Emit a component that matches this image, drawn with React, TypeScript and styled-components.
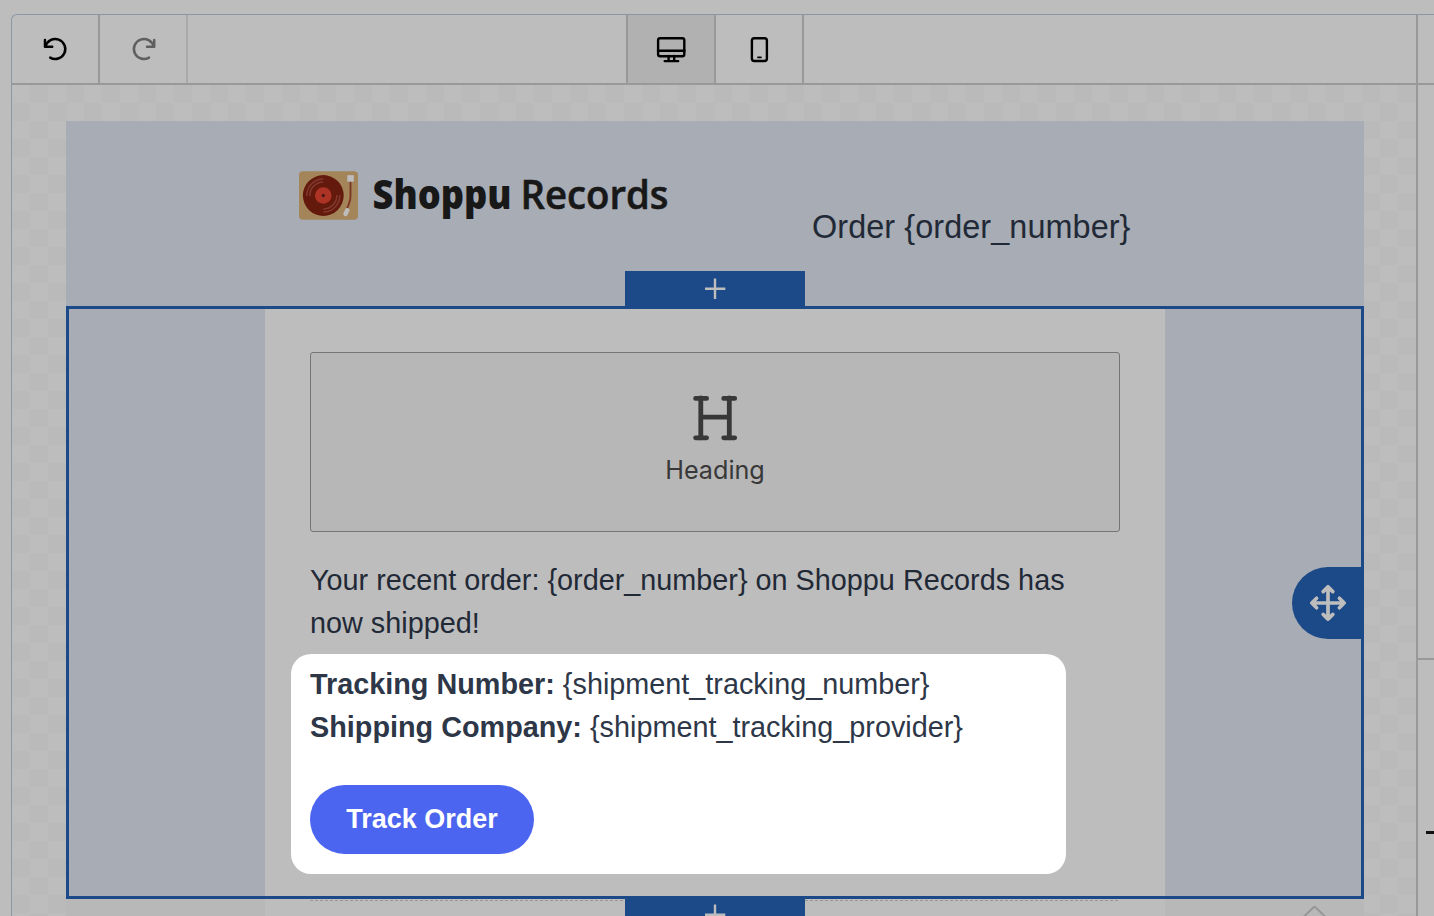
import React from "react";
import styled, { createGlobalStyle } from "styled-components";

const ColorPalette = {
	page: "#bdbdbd",
	checker: "#bababa",
	frame: "#8a98a6",
	line: "#999999",
	lineSoft: "#a9a9a9",
	active: "#b1b1b1",
	section: "#a7acb5",
	footer: "#b8b8b8",
	blue: "#1c4987",
	ink: "#222936",
	inkBright: "#2d3748",
	button: "#4c65f0",
	white: "#ffffff",
};

const GlobalStyle = createGlobalStyle`
	* {
		box-sizing: border-box;
	}
	body {
		margin: 0;
		background: ${ColorPalette.page};
		font-family: "Liberation Sans", Arial, sans-serif;
		overflow: hidden;
	}
	svg {
		display: block;
	}
`;

const Page = styled.div`
	height: 916px;
	padding: 14px 0 0 11px;
	overflow: hidden;
`;

const Editor = styled.div`
	display: flex;
	height: 920px;
	border: 1px solid ${ColorPalette.frame};
	border-right: 0;
	border-top-left-radius: 6px;
`;

const Main = styled.div`
	width: 1406px;
	flex: none;
	display: flex;
	flex-direction: column;
	border-right: 2px solid ${ColorPalette.line};
`;

const Toolbar = styled.div`
	height: 70px;
	flex: none;
	display: flex;
	border-bottom: 2px solid ${ColorPalette.line};
`;

const ToolGroup = styled.div`
	display: flex;
	flex: none;
`;

const DeviceGroup = styled(ToolGroup)`
	border-left: 2px solid ${ColorPalette.line};
	margin-left: 438px;
`;

const ToolButton = styled.button<{ $active?: boolean; $soft?: boolean }>`
	width: 88px;
	height: 68px;
	padding: 0;
	border: 0;
	border-right: 2px solid ${(props) => (props.$soft ? ColorPalette.lineSoft : ColorPalette.line)};
	background: ${(props) => (props.$active ? ColorPalette.active : "transparent")};
	color: ${(props) => (props.$soft ? "#5f5f5f" : "#000")};
`;

const Canvas = styled.div`
	flex: 1;
	padding: 36px 52px 0 54px;
	background: repeating-conic-gradient(${ColorPalette.checker} 0 25%, ${ColorPalette.page} 0 50%) 0 0 / 36px 36px;
`;

const HeaderSection = styled.div`
	height: 185px;
	padding: 40px 199px 0 233px;
	display: flex;
	background: ${ColorPalette.section};
`;

const OrderTitle = styled.div`
	margin: 42px 0 0 133px;
	font-size: 32.4px;
	line-height: 49px;
	letter-spacing: 0.08px;
	color: ${ColorPalette.ink};
	white-space: nowrap;
`;

const SelectedSection = styled.div`
	position: relative;
	height: 593px;
	padding: 0 196px;
	border: 3px solid ${ColorPalette.blue};
	background: ${ColorPalette.section};
`;

const AddTab = styled.div<{ $bottom?: boolean }>`
	position: absolute;
	left: 556px;
	top: ${(props) => (props.$bottom ? "588px" : "-38px")};
	width: 180px;
	height: 37px;
	background: ${ColorPalette.blue};
`;

const MoveHandle = styled.div`
	position: absolute;
	right: -3px;
	top: 258px;
	width: 72px;
	height: 72px;
	border-radius: 36px 0 0 36px;
	background: ${ColorPalette.blue};
`;

const Content = styled.div`
	height: 587px;
	padding: 43px 45px 0;
	background: ${ColorPalette.page};
`;

const HeadingBlock = styled.div`
	height: 180px;
	padding-top: 41px;
	display: flex;
	flex-direction: column;
	align-items: center;
	border: 1px solid #757575;
	border-radius: 3px;
	background: #b7b7b7;
	color: #383838;
`;

const HeadingLabel = styled.div`
	margin-top: 12px;
	font-family: Inter, sans-serif;
	font-size: 25.2px;
	line-height: 32px;
`;

const Paragraph = styled.p<{ $bright?: boolean }>`
	margin: 0;
	font-size: 28.8px;
	line-height: 43.2px;
	color: ${(props) => (props.$bright ? ColorPalette.inkBright : ColorPalette.ink)};
	white-space: nowrap;
`;

const Message = styled.div`
	padding-top: 27px;
	height: 122px;
`;

const Spotlight = styled.div`
	width: 775px;
	height: 220px;
	margin-left: -19px;
	padding: 9px 19px 0;
	border-radius: 20px;
	background: ${ColorPalette.white};
`;

const TrackButton = styled.button`
	display: block;
	width: 224px;
	height: 69px;
	margin-top: 35.6px;
	padding: 0;
	border: 0;
	border-radius: 35px;
	background: ${ColorPalette.button};
	color: ${ColorPalette.white};
	font: bold 27px "Liberation Sans", Arial, sans-serif;
`;

const FooterSection = styled.div`
	height: 40px;
	padding-left: 199px;
	display: flex;
	background: ${ColorPalette.footer};
`;

const FooterContent = styled.div`
	width: 900px;
	flex: none;
	padding: 1px 45px 0;
	background: ${ColorPalette.page};
`;

const DashedRule = styled.div`
	height: 1px;
	background: repeating-linear-gradient(90deg, #989898 0 3px, transparent 3px 5px);
`;

const Chevron = styled.div`
	padding: 6px 0 0 138px;
`;

const SidePanel = styled.div`
	flex: 1;
`;

const PanelHeader = styled.div`
	height: 70px;
	border-bottom: 2px solid ${ColorPalette.line};
`;

const PanelBody = styled.div`
	height: 575px;
	border-bottom: 2px solid ${ColorPalette.line};
`;

const PanelMark = styled.div`
	height: 3px;
	margin: 171px 0 0 8px;
	background: #111;
`;

interface UndoIconProps {
	flip?: boolean;
}

function UndoIcon(props: UndoIconProps) {
	return (
		<svg width="86" height="68" fill="none" stroke="currentColor" strokeWidth="2.5" strokeLinecap="round" strokeLinejoin="round">
			<g transform={props.flip ? "translate(87.2 0) scale(-1 1)" : undefined}>
				<path d="M38.2 42.6A10 10 0 1 0 33.6 31.6" />
				<path d="M33 25V31.8H40.2" />
			</g>
		</svg>
	);
}

function DesktopIcon() {
	return (
		<svg width="86" height="68" fill="none" stroke="currentColor" strokeWidth="2.4" strokeLinecap="round">
			<rect x="30.1" y="23.3" width="26.2" height="17.9" rx="2" />
			<path d="M30 35.8H56.5M40.6 41V45.5M46.2 41V45.5M36.7 46.1H50.2" />
		</svg>
	);
}

function MobileIcon() {
	return (
		<svg width="86" height="68" fill="none" stroke="currentColor" strokeWidth="2.4" strokeLinecap="round">
			<rect x="35.9" y="23.3" width="15" height="22.7" rx="2.4" />
			<path d="M41.9 42.4H45" strokeWidth="1.6" />
		</svg>
	);
}

function PlusIcon() {
	return (
		<svg width="180" height="37" stroke="#bdbdbd" strokeWidth="2.4">
			<path d="M80 17.7H100.3M90 7.5V28" />
		</svg>
	);
}

function MoveIcon() {
	return (
		<svg width="72" height="72" fill="none" stroke="#bdbdbd" strokeWidth="3.7" strokeLinecap="round" strokeLinejoin="round">
			<path d="M36 20V52M20 36H52M31.2 24.6L36 19.8L40.8 24.6M31.2 47.4L36 52.2L40.8 47.4M24.6 31.2L19.8 36L24.6 40.8M47.4 31.2L52.2 36L47.4 40.8" />
		</svg>
	);
}

function HeadingIcon() {
	return (
		<svg width="46" height="48" viewBox="692 394 46 48" stroke="currentColor" strokeWidth="4.8" strokeLinecap="round">
			<path d="M695.6 398.4H706.6M723.7 398.4H734.7M695.6 437.8H706.6M723.7 437.8H734.7M700.8 398V438M729.3 398V438M701 417.2H729" />
		</svg>
	);
}

function ShoppuLogo() {
	return (
		<svg width="380" height="80" viewBox="299 161 380 80">
			<rect x="299" y="171.3" width="59" height="48.5" rx="4" fill="#a48459" />
			<circle cx="323.3" cy="195.5" r="20.4" fill="#64190d" />
			<g fill="none" stroke="#81392e" strokeWidth="1.5">
				<path d="M306.8 196A16.5 16.5 0 0 1 323.3 179M309.8 196A13.5 13.5 0 0 1 323.3 182M339.8 195A16.5 16.5 0 0 1 323.3 212M336.8 195A13.5 13.5 0 0 1 323.3 209" />
			</g>
			<circle cx="323.3" cy="195.5" r="8.3" fill="#ad3324" />
			<circle cx="323.3" cy="195.5" r="1.7" fill="#4c1712" />
			<path d="M350.5 181V196Q350.5 201 347 208.5" fill="none" stroke="#7c3527" strokeWidth="1.8" />
			<rect x="347.3" y="175.2" width="6.5" height="6.5" fill="#bdbdbd" />
			<path d="M347.3 210.2L345.5 214" stroke="#bdbdbd" strokeWidth="4.4" strokeLinecap="round" />
			<g fill="#181818" fontFamily="'Open Sans', sans-serif" fontSize="40">
				<text x="372.5" y="209" fontWeight="800" textLength="139" lengthAdjust="spacingAndGlyphs">Shoppu</text>
				<text x="520.5" y="209" fontWeight="600" stroke="#181818" strokeWidth="0.6" textLength="148" lengthAdjust="spacingAndGlyphs">Records</text>
			</g>
		</svg>
	);
}

export default function App() {
	return (
		<Page>
			<GlobalStyle />
			<Editor>
				<Main>
					<Toolbar>
						<ToolGroup>
							<ToolButton>
								<UndoIcon />
							</ToolButton>
							<ToolButton $soft>
								<UndoIcon flip />
							</ToolButton>
						</ToolGroup>
						<DeviceGroup>
							<ToolButton $active>
								<DesktopIcon />
							</ToolButton>
							<ToolButton>
								<MobileIcon />
							</ToolButton>
						</DeviceGroup>
					</Toolbar>
					<Canvas>
						<HeaderSection>
							<ShoppuLogo />
							<OrderTitle>{"Order {order_number}"}</OrderTitle>
						</HeaderSection>
						<SelectedSection>
							<Content>
								<HeadingBlock>
									<HeadingIcon />
									<HeadingLabel>Heading</HeadingLabel>
								</HeadingBlock>
								<Message>
									<Paragraph>
										{"Your recent order: {order_number} on Shoppu Records has"}
										<br />
										now shipped!
									</Paragraph>
								</Message>
								<Spotlight>
									<Paragraph $bright>
										<b>Tracking Number:</b> {"{shipment_tracking_number}"}
										<br />
										<b>Shipping Company:</b> {"{shipment_tracking_provider}"}
									</Paragraph>
									<TrackButton>Track Order</TrackButton>
								</Spotlight>
							</Content>
							<AddTab>
								<PlusIcon />
							</AddTab>
							<AddTab $bottom>
								<PlusIcon />
							</AddTab>
							<MoveHandle>
								<MoveIcon />
							</MoveHandle>
						</SelectedSection>
						<FooterSection>
							<FooterContent>
								<DashedRule />
							</FooterContent>
							<Chevron>
								<svg width="24" height="16" fill="none" stroke="#979797" strokeWidth="2">
									<path d="M1 11.5L10 2.8Q11.5 1.3 13 2.8L22 11.5" />
								</svg>
							</Chevron>
						</FooterSection>
					</Canvas>
				</Main>
				<SidePanel>
					<PanelHeader />
					<PanelBody />
					<PanelMark />
				</SidePanel>
			</Editor>
		</Page>
	);
}
